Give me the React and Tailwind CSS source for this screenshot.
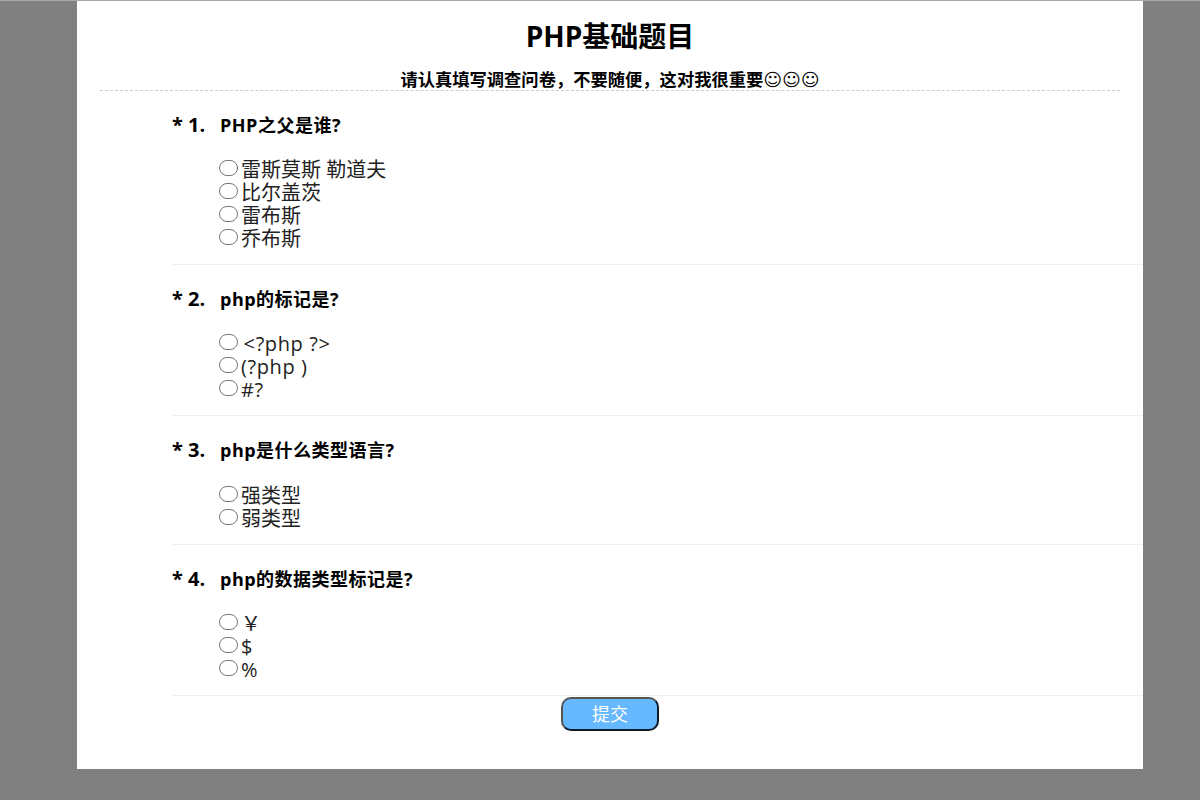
import React from "react";

const questions = [
  { num: 1, title: "PHP之父是谁?", options: ["雷斯莫斯 勒道夫", "比尔盖茨", "雷布斯", "乔布斯"] },
  { num: 2, title: "php的标记是?", options: ["\u200a<?php ?>", "(?php )", "#?"] },
  { num: 3, title: "php是什么类型语言?", options: ["强类型", "弱类型"] },
  { num: 4, title: "php的数据类型标记是?", options: ["￥", "$", "%"] },
];

const fontStack = "font-['Open_Sans','Noto_Sans_CJK_SC',sans-serif]";

function Question({ num, title, options }) {
  return (
    <div className="ml-[95px] border-b border-[#f0f0f0] pt-[23px] first:pt-[22.67px] pb-[13.83px]">
      <div className="flex items-center h-[22px] font-bold text-black">
        <span className="w-[48px] text-[20px] leading-[22px] whitespace-pre">{`* ${num}.`}</span>
        <span className="text-[18px] leading-[22px] tracking-[0.5px]">{title}</span>
      </div>
      <div className="mt-[22.5px] ml-[47px]">
        {options.map((opt) => (
          <label key={opt} className="flex items-center h-[23px] text-[20px] leading-[23px] text-[#222]">
            <input
              type="radio"
              name={`q${num}`}
              className="appearance-none w-[19px] h-[16px] rounded-full border border-[#777] bg-white mr-[3px] mb-[3px] shrink-0"
            />
            <span className={num === 2 ? "whitespace-pre tracking-[0.6px]" : "whitespace-pre"}>{opt}</span>
          </label>
        ))}
      </div>
    </div>
  );
}

export default function App() {
  return (
    <div className={`w-[1200px] h-[800px] overflow-hidden bg-[#808080] border-t border-[#aaa] ${fontStack}`}>
      <div className="ml-[77px] w-[1066px] h-[768px] bg-white">
        <h1 className="pt-[19px] h-[59px] text-center text-[28px] leading-[32px] font-bold text-black">
          PHP基础题目
        </h1>
        <div className="mx-[23px] w-[1020px] h-[31px] pt-[9px] border-b border-dashed border-[#ccc] text-center text-[17.3px] leading-[21px] font-bold text-black">
          请认真填写调查问卷，不要随便，这对我很重要
          <span className="text-[18px] font-normal font-['DejaVu_Sans',sans-serif]">☺☺☺</span>
        </div>
        <div>
          {questions.map((q) => (
            <Question key={q.num} {...q} />
          ))}
        </div>
        <div className="flex justify-center">
          <button className="w-[98px] h-[34px] mt-px rounded-[10px] border-2 border-t-[#555] border-l-[#555] border-r-[#0b1a2b] border-b-[#0b1a2b] bg-[#66b8ff] text-white text-[18px] leading-[24px]">
            提交
          </button>
        </div>
      </div>
    </div>
  );
}
